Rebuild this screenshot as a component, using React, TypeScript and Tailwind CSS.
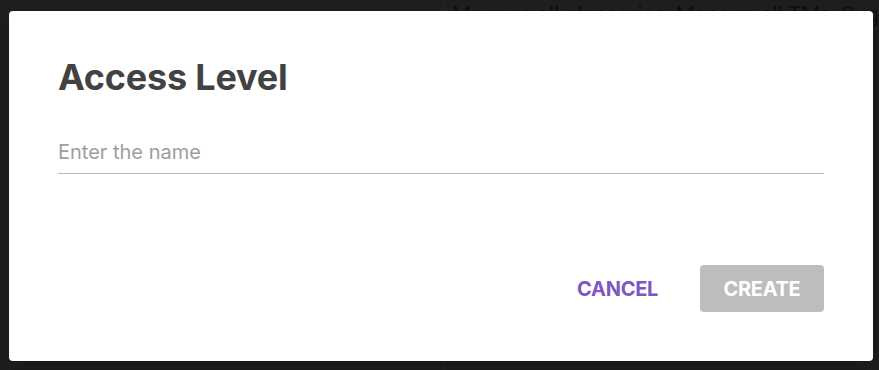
import React from 'react';

const App = () => {
  return (
    <div className="relative w-[879px] h-[370px] overflow-hidden bg-[#1e1e1e] font-['Inter',sans-serif]">
      {/* page behind the overlay */}
      <div className="absolute left-[444px] top-0 h-full w-px bg-[#262626]" />
      <div className="absolute left-[452px] top-[-2px] whitespace-nowrap text-[22px] text-[#0e0e0e] font-['Roboto',sans-serif]">
        Manage all glossaries, Manage all TMs, Suggest
      </div>

      {/* dialog */}
      <div className="absolute left-[9px] top-[11px] w-[864px] h-[350px] bg-white rounded-[4px] shadow-xl flex flex-col px-[49px] pt-[44px] pb-[49px]">
        <h2 className="text-[36px] leading-[44px] font-bold text-[#424242] tracking-[-0.2px]">Access Level</h2>

        <div className="mt-[39px] border-b border-[#bdbdbd] pb-[7px]">
          <input
            type="text"
            placeholder="Enter the name"
            className="w-full bg-transparent outline-none text-[20px] leading-[28px] text-[#424242] placeholder:text-[#9e9e9e]"
          />
        </div>

        <div className="mt-auto flex items-center justify-end gap-[42px]">
          <button className="text-[20px] font-bold text-[#7e57c2] tracking-[-0.3px]">CANCEL</button>
          <button
            disabled
            className="w-[124px] h-[47px] rounded-[4px] bg-[#bdbdbd] text-[20px] font-bold text-white tracking-[-0.3px]"
          >
            CREATE
          </button>
        </div>
      </div>
    </div>
  );
};

export default App;
